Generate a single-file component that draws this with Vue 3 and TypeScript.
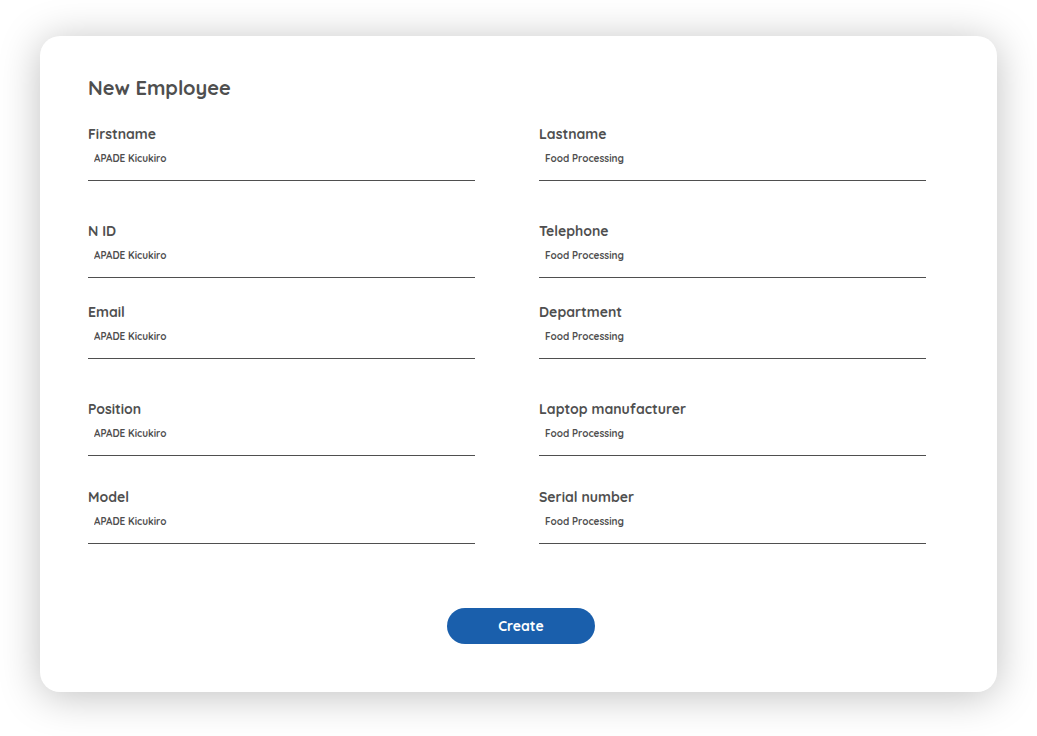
<script setup lang="ts">
import { reactive } from 'vue'

interface Field {
  id: string
  label: string
  value: string
}

const left = 'APADE Kicukiro'
const right = 'Food Processing'

const fields = reactive<Field[]>([
  { id: 'firstname', label: 'Firstname', value: left },
  { id: 'lastname', label: 'Lastname', value: right },
  { id: 'nid', label: 'N ID', value: left },
  { id: 'telephone', label: 'Telephone', value: right },
  { id: 'email', label: 'Email', value: left },
  { id: 'department', label: 'Department', value: right },
  { id: 'position', label: 'Position', value: left },
  { id: 'manufacturer', label: 'Laptop manufacturer', value: right },
  { id: 'model', label: 'Model', value: left },
  { id: 'serial', label: 'Serial number', value: right },
])
</script>

<template>
  <main class="page">
    <form class="card" @submit.prevent>
      <h1 class="title">New Employee</h1>
      <div class="fields">
        <div v-for="field in fields" :key="field.id" class="field">
          <label class="label" :for="field.id">{{ field.label }}</label>
          <input :id="field.id" v-model="field.value" class="input" type="text" />
        </div>
      </div>
      <button class="create" type="submit">Create</button>
    </form>
  </main>
</template>

<style>
body {
  background: #fff;
}
</style>

<style scoped>
.page {
  box-sizing: border-box;
  min-height: 100vh;
  padding: 36px 40px 44px;
  display: flex;
  font-family: Quicksand, Lato, 'Open Sans', sans-serif;
  color: #4f4f4f;
}

.card {
  box-sizing: border-box;
  flex: 1;
  padding: 40px 71px 48px 48px;
  display: flex;
  flex-direction: column;
  border-radius: 20px;
  background: #fff;
  box-shadow: 0 4px 40px rgba(0, 0, 0, 0.25);
}

.title {
  margin: 0 0 24px;
  font-size: 20px;
  line-height: 24px;
  font-weight: 700;
}

.fields {
  display: grid;
  grid-template-columns: 1fr 1fr;
  grid-template-rows: 97px 81px 97px 88px 57px;
  column-gap: 64px;
}

.field {
  display: flex;
  flex-direction: column;
}

.label {
  font-size: 14px;
  line-height: 20px;
  font-weight: 700;
}

.input {
  box-sizing: border-box;
  width: 100%;
  height: 37px;
  padding: 0 6px 8px;
  border: 0;
  border-bottom: 1px solid #4f4f4f;
  background: transparent;
  color: inherit;
  font-family: inherit;
  font-size: 10px;
  font-weight: 700;
}

.input:focus {
  outline: none;
  border-bottom-color: #1a5fac;
}

.create {
  align-self: center;
  width: 148px;
  height: 36px;
  margin: 64px 0 0 28px;
  border: 0;
  border-radius: 18px;
  background: #1a5fac;
  color: #fff;
  font-family: inherit;
  font-size: 14px;
  font-weight: 700;
  cursor: pointer;
}
</style>
